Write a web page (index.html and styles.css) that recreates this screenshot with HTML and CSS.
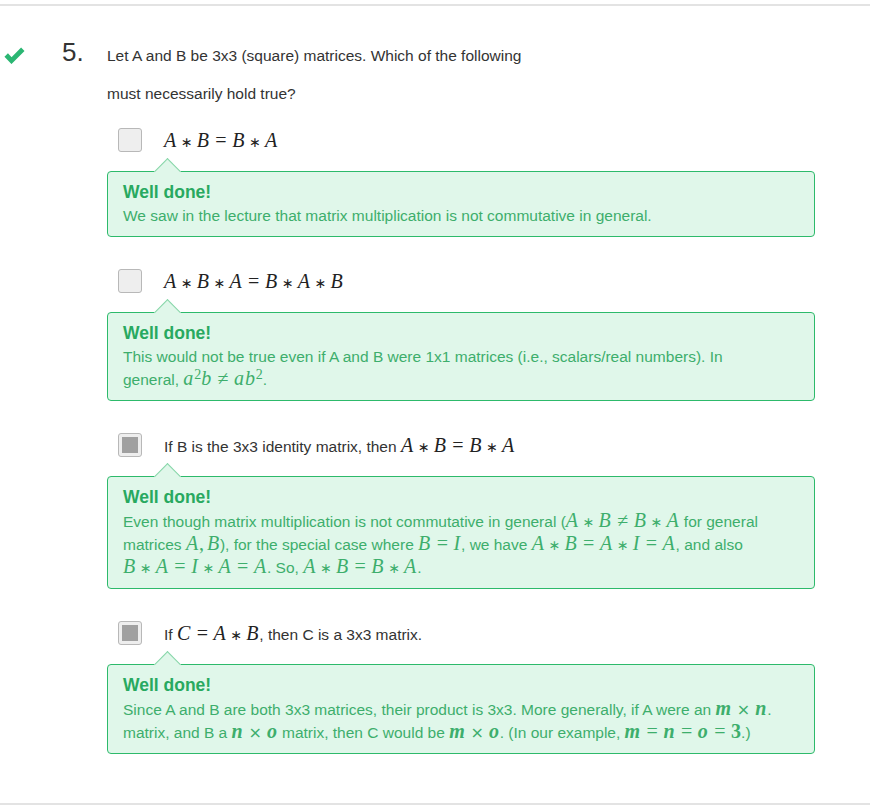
FILE: index.html
```html
<!DOCTYPE html>
<html>
<head>
<meta charset="utf-8">
<link rel="stylesheet" href="styles.css">
</head>
<body>
<div class="question">
  <div class="status">
    <svg class="check" width="21" height="17" viewBox="0 0 21 17"><polyline points="2.2,8 7.5,13.6 18.8,2.2" fill="none" stroke="#2bb673" stroke-width="4.8" stroke-linecap="butt" stroke-linejoin="miter"/></svg>
  </div>
  <div class="num">5.</div>
  <div class="body">
    <p class="prompt">Let A and B be 3x3 (square) matrices. Which of the following<br>must necessarily hold true?</p>

    <div class="option">
      <div class="opt-row">
        <span class="cb"></span>
        <span class="opt-text"><span class="m"><i>A</i><span class="b">∗</span><i>B</i><span class="r">=</span><i>B</i><span class="b">∗</span><i>A</i></span></span>
      </div>
      <div class="feedback">
        <div class="fb-title">Well done!</div>
        <div class="fb-text">We saw in the lecture that matrix multiplication is not commutative in general.</div>
      </div>
    </div>

    <div class="option">
      <div class="opt-row">
        <span class="cb"></span>
        <span class="opt-text"><span class="m"><i>A</i><span class="b">∗</span><i>B</i><span class="b">∗</span><i>A</i><span class="r">=</span><i>B</i><span class="b">∗</span><i>A</i><span class="b">∗</span><i>B</i></span></span>
      </div>
      <div class="feedback">
        <div class="fb-title">Well done!</div>
        <div class="fb-text">This would not be true even if A and B were 1x1 matrices (i.e., scalars/real numbers). In<br>general, <span class="m fm"><i>a</i><sup>2</sup><i>b</i><span class="r">≠</span><i>a</i><i>b</i><sup>2</sup></span>.</div>
      </div>
    </div>

    <div class="option">
      <div class="opt-row">
        <span class="cb on"></span>
        <span class="opt-text">If B is the 3x3 identity matrix, then <span class="m"><i>A</i><span class="b">∗</span><i>B</i><span class="r">=</span><i>B</i><span class="b">∗</span><i>A</i></span></span>
      </div>
      <div class="feedback">
        <div class="fb-title">Well done!</div>
        <div class="fb-text">Even though matrix multiplication is not commutative in general (<span class="m fm"><i>A</i><span class="b">∗</span><i>B</i><span class="r">≠</span><i>B</i><span class="b">∗</span><i>A</i></span> for general<br>matrices <span class="m fm"><i>A</i>,<span class="c"></span><i>B</i></span>), for the special case where <span class="m fm"><i>B</i><span class="r">=</span><i>I</i></span>, we have <span class="m fm"><i>A</i><span class="b">∗</span><i>B</i><span class="r">=</span><i>A</i><span class="b">∗</span><i>I</i><span class="r">=</span><i>A</i></span>, and also<br><span class="m fm"><i>B</i><span class="b">∗</span><i>A</i><span class="r">=</span><i>I</i><span class="b">∗</span><i>A</i><span class="r">=</span><i>A</i></span>. So, <span class="m fm"><i>A</i><span class="b">∗</span><i>B</i><span class="r">=</span><i>B</i><span class="b">∗</span><i>A</i></span>.</div>
      </div>
    </div>

    <div class="option">
      <div class="opt-row">
        <span class="cb on"></span>
        <span class="opt-text">If <span class="m"><i>C</i><span class="r">=</span><i>A</i><span class="b">∗</span><i>B</i></span>, then C is a 3x3 matrix.</span>
      </div>
      <div class="feedback">
        <div class="fb-title">Well done!</div>
        <div class="fb-text">Since A and B are both 3x3 matrices, their product is 3x3. More generally, if A were an <span class="m fm bi"><i>m</i><span class="b x">×</span><i>n</i></span>.<br>matrix, and B a <span class="m fm bi"><i>n</i><span class="b x">×</span><i>o</i></span> matrix, then C would be <span class="m fm bi"><i>m</i><span class="b x">×</span><i>o</i></span>. (In our example, <span class="m fm bi"><i>m</i><span class="r">=</span><i>n</i><span class="r">=</span><i>o</i><span class="r">=</span><b>3</b></span>.)</div>
      </div>
    </div>
  </div>
</div>
</body>
</html>
```

FILE: styles.css
```css
html, body {
  margin: 0;
  padding: 0;
  background: #ffffff;
}

body {
  font-family: "Liberation Sans", Arial, sans-serif;
  color: #333333;
}

.question {
  width: 870px;
  margin-top: 4px;
  border-top: 2px solid #e3e3e3;
  border-bottom: 2px solid #e3e3e3;
  display: flex;
  padding-top: 31px;
  padding-bottom: 49px;
}

.status {
  width: 62px;
  flex: none;
}

.check {
  display: block;
  margin-left: 4px;
  margin-top: 10px;
}

.num {
  width: 45px;
  flex: none;
  font-size: 26px;
  line-height: 30px;
  color: #333;
}

.body {
  width: 708px;
  flex: none;
}

.prompt {
  margin: 0;
  font-size: 15.5px;
  line-height: 38px;
}

.option {
  margin-top: 32px;
}

.option:first-of-type {
  margin-top: 15px;
}

.opt-row {
  display: flex;
  align-items: center;
  height: 24px;
  padding-left: 11px;
  font-size: 15.5px;
}

.cb {
  flex: none;
  width: 22px;
  height: 22px;
  border: 1px solid #b8b8b8;
  border-radius: 3px;
  background: #eeeeee;
  position: relative;
  box-sizing: content-box;
}

.cb.on::after {
  content: "";
  position: absolute;
  left: 3px;
  top: 3px;
  width: 16px;
  height: 16px;
  background: #a0a0a0;
}

.opt-text {
  margin-left: 22px;
  white-space: nowrap;
}

.m {
  font-family: "Liberation Serif", "Times New Roman", serif;
  font-size: 20px;
  line-height: 1;
  color: #222;
  white-space: nowrap;
}

.m i {
  font-style: italic;
  padding-right: 0.04em;
}

.m sup {
  font-size: 0.7em;
  line-height: 0;
  vertical-align: 0.45em;
  font-style: normal;
}

.m .b {
  font-family: "DejaVu Sans", sans-serif;
  font-style: normal;
  font-size: 14px;
  margin: 0 4px;
}

.m .b.x {
  font-size: 16px;
  margin: 0 5px;
  font-weight: normal;
}

.m .r {
  font-style: normal;
  margin: 0 0.28em;
}

.m .c {
  display: inline-block;
  width: 0.15em;
}

.m.fm {
  color: inherit;
  font-size: 20px;
}

.m.bi i,
.m.bi b {
  font-weight: bold;
}

.feedback {
  position: relative;
  margin-top: 19px;
  background: #e0f7ea;
  border: 1px solid #2dba6b;
  border-radius: 4px;
  padding: 8px 16px 9px 15px;
}

.feedback::before {
  content: "";
  position: absolute;
  width: 18px;
  height: 18px;
  left: 50px;
  top: -10px;
  background: #e0f7ea;
  border-left: 1px solid #86d6a8;
  border-top: 1px solid #86d6a8;
  transform: rotate(45deg);
}

.fb-title {
  position: relative;
  font-size: 17.5px;
  font-weight: bold;
  line-height: 24px;
  color: #28a960;
}

.fb-text {
  position: relative;
  margin-top: 1px;
  font-size: 15.5px;
  line-height: 22px;
  color: #3dae6c;
}
```
